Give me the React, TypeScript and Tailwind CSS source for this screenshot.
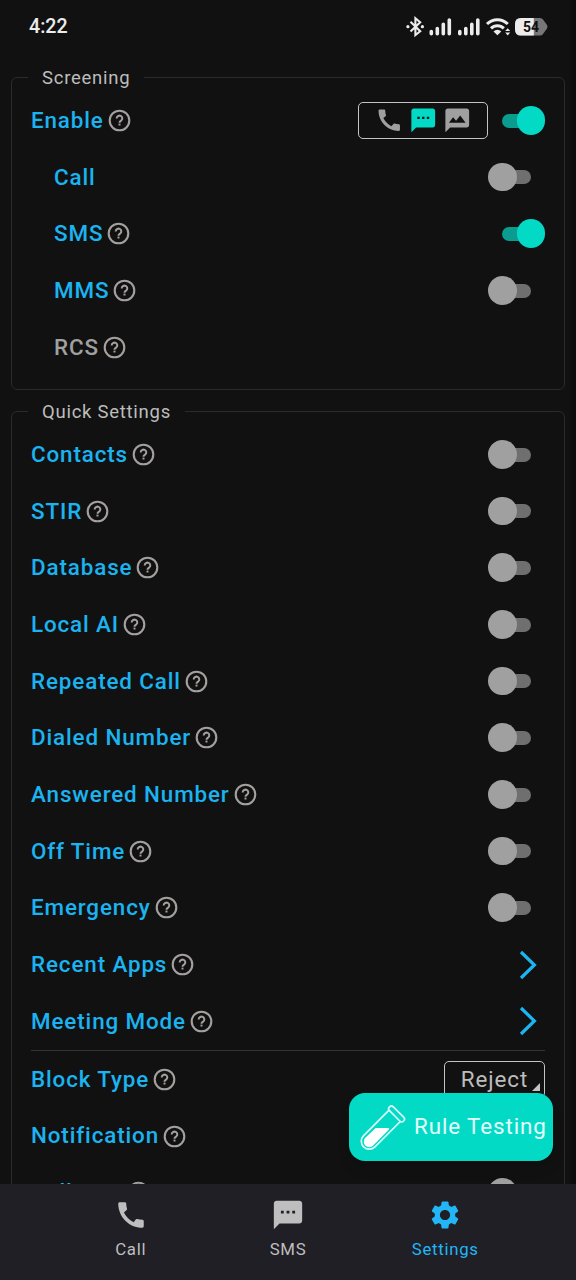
import type { ReactNode } from "react";
import { MdCall, MdSms, MdMms, MdSettings } from "react-icons/md";

function HelpIcon() {
  return (
    <svg className="ml-[4px] size-[23px] shrink-0" viewBox="0 0 23 23" fill="none">
      <circle cx="11.5" cy="11.5" r="9.8" stroke="#a3a09f" strokeWidth="2.1" />
      <path d="M8.7 9.4a2.8 2.7 0 1 1 4.5 2.1c-1 .8-1.7 1.1-1.7 2.2" stroke="#a3a09f" strokeWidth="2" />
      <rect x="10.5" y="14.6" width="2" height="1.9" fill="#a3a09f" />
    </svg>
  );
}

function Switch({ on = false }: { on?: boolean }) {
  return (
    <span className="relative flex h-[29px] w-[57px] items-center justify-center">
      <span className={`h-[14px] w-[29px] rounded-full ${on ? "bg-[#0a9c8e]" : "bg-[#6f6f6f]"}`} />
      <span
        className={`absolute top-0 size-[28.5px] rounded-full ${on ? "right-0 bg-[#03dac6]" : "left-0 bg-[#a0a0a0]"}`}
      />
    </span>
  );
}

function Arrow() {
  return (
    <svg className="mr-[8px] h-[30px] w-[18px]" viewBox="0 0 18 30" fill="none">
      <path d="M2 2 L15.4 15 L2 28" stroke="#1db4f2" strokeWidth="3.2" />
    </svg>
  );
}

type RowProps = { label: string; help?: boolean; sub?: boolean; muted?: boolean; children?: ReactNode };

function Row({ label, help = true, sub = false, muted = false, children }: RowProps) {
  return (
    <div className={`flex h-[56.67px] items-center pr-[19px] ${sub ? "pl-[42px]" : "pl-[19px]"}`}>
      <span
        className={`pb-[0.8px] text-[22.4px] leading-none font-medium tracking-[0.88px] whitespace-nowrap ${muted ? "text-[#a0a0a0]" : "text-[#1bb3f0]"}`}
      >
        {label}
      </span>
      {help && <HelpIcon />}
      <div className="ml-auto flex items-center">{children}</div>
    </div>
  );
}

function Section({ title, className, children }: { title: string; className: string; children: ReactNode }) {
  return (
    <fieldset className={`mx-[11px] rounded-[6px] border-[1.5px] border-[#2b2b2b] ${className}`}>
      <legend className="ml-[16px] h-[20px] px-[14px] text-[18.5px] leading-[20px] tracking-[0.74px] text-[#bdbdbd]">
        {title}
      </legend>
      {children}
    </fieldset>
  );
}

function StatusBar() {
  return (
    <header className="flex h-[53px] shrink-0 items-center justify-between pr-[28px] pl-[29px]">
      <span className="text-[19.6px] font-medium text-[#ececec]">4:22</span>
      <svg className="h-[24px] w-[142px]" viewBox="0 0 142 24" fill="none">
        <path d="M4.5 6.8 L14.2 16.2 L9.4 20 V3.2 L14.2 7.3 L4.5 16.6" stroke="#ececec" strokeWidth="2.1" />
        <circle cx="1.9" cy="11.7" r="1.6" fill="#ececec" />
        <circle cx="16.4" cy="11.7" r="1.6" fill="#ececec" />
        <g stroke="#ececec" strokeWidth="3.6" strokeLinecap="round">
          <path d="M25.3 16.5v2.2M31.3 13.5v5.2M37.3 9.3v9.4M43.3 5v13.7" />
          <path d="M53.8 16.5v2.2M59.8 13.5v5.2M65.8 9.3v9.4M71.8 5v13.7" />
        </g>
        <path d="M81 9a14.6 14.6 0 0 1 20.8 0M85 13.4a9 9 0 0 1 12.8 0" stroke="#ececec" strokeWidth="3" />
        <path d="M87.5 16.4a5.6 5.6 0 0 1 7.8 0L91.4 20.2z" fill="#ececec" />
        <path d="M99.2 16 101.7 13.2 104.2 16zM99.2 17.6 101.7 20.4 104.2 17.6z" fill="#ececec" />
        <path d="M115 3h19q2 0 3 1.5l4 5.5q1 1.8 0 3.6l-4 5.5q-1 1.5-3 1.5h-19q-6 0-6-6V9q0-6 6-6z" fill="#777" />
        <path d="M115 3h12.8v17.6H115q-6 0-6-6V9q0-6 6-6z" fill="#ececec" />
        <text x="117" y="16.8" fontSize="14" fontWeight="700" fill="#111">54</text>
      </svg>
    </header>
  );
}

function TestTube() {
  return (
    <svg className="h-[48px] w-[46px] shrink-0" viewBox="0 0 46 48" fill="none" stroke="#d9fffa">
      <g transform="translate(36.5 11) rotate(45)" strokeWidth="1.7">
        <path d="M-8 2.6V38.5a8 8 0 0 0 16 0V2.6" />
        <rect x="-10" y="-2.8" width="20" height="5.4" rx="2.7" />
      </g>
      <path d="M15.7 25H28.7q1 .5 .2 1.5L13.2 42.6a5.5 5.5 0 0 1-7.8-7.8z" fill="#fff" stroke="none" />
    </svg>
  );
}

function NavItem({ icon, label, active = false }: { icon: ReactNode; label: string; active?: boolean }) {
  return (
    <div className={`flex w-[157.3px] flex-col items-center pt-[14px] ${active ? "text-[#22b6f6]" : "text-[#bebebf]"}`}>
      {icon}
      <span className="mt-[6.5px] text-[16.8px] leading-[20px] tracking-[0.7px]">{label}</span>
    </div>
  );
}

const toggles = [
  "Contacts",
  "STIR",
  "Database",
  "Local AI",
  "Repeated Call",
  "Dialed Number",
  "Answered Number",
  "Off Time",
  "Emergency",
];

export default function App() {
  return (
    <div className="relative flex h-[1280px] w-[576px] flex-col overflow-hidden bg-[#111111] bg-[linear-gradient(90deg,#111111_98.7%,#0c0c0c_99.5%)] font-['Roboto',sans-serif]">
      <StatusBar />
      <main className="min-h-0 flex-1 overflow-hidden pt-[14.5px]">
        <Section title="Screening" className="h-[322px] pt-[4.8px]">
          <Row label="Enable">
            <div className="flex h-[37px] w-[130px] items-center justify-center gap-[5.5px] rounded-[5px] border-[1.5px] border-[#c4c4c4] text-[#a0a0a0]">
              <MdCall size={28.5} />
              <MdSms size={28.5} className="text-[#03dac6]" />
              <MdMms size={28.5} />
            </div>
            <Switch on />
          </Row>
          <Row label="Call" help={false} sub>
            <Switch />
          </Row>
          <Row label="SMS" sub>
            <Switch on />
          </Row>
          <Row label="MMS" sub>
            <Switch />
          </Row>
          <Row label="RCS" sub muted />
        </Section>
        <Section title="Quick Settings" className="mt-[12px] h-[900px] pt-[4.8px]">
          {toggles.map((label) => (
            <Row key={label} label={label}>
              <Switch />
            </Row>
          ))}
          <Row label="Recent Apps">
            <Arrow />
          </Row>
          <Row label="Meeting Mode">
            <Arrow />
          </Row>
          <div className="mx-[19px] h-[1.5px] bg-[#343434]" />
          <Row label="Block Type">
            <div className="relative flex h-[37px] w-[101px] items-center justify-center rounded-[5px] border-[1.5px] border-[#c4c4c4] text-[22.4px] tracking-[0.9px] text-[#bdbdbd]">
              Reject
              <svg className="absolute right-[4.5px] bottom-[6px] size-[8px]" viewBox="0 0 8 8">
                <path d="M8 0v8H0z" fill="#c4c4c4" />
              </svg>
            </div>
          </Row>
          <Row label="Notification" />
          <Row label="Caller ID">
            <Switch />
          </Row>
        </Section>
      </main>
      <button className="absolute top-[1093px] left-[349px] flex h-[68px] w-[204px] items-center rounded-[16px] bg-[#03dac6] pl-[11px] text-[22.4px] tracking-[0.9px] whitespace-nowrap text-[#e4fffb] shadow-lg">
        <TestTube />
        <span className="ml-[8px]">Rule Testing</span>
      </button>
      <nav className="z-10 flex h-[96px] shrink-0 justify-center bg-[#201f25]">
        <NavItem icon={<MdCall size={34} />} label="Call" />
        <NavItem icon={<MdSms size={34} />} label="SMS" />
        <NavItem icon={<MdSettings size={34} />} label="Settings" active />
      </nav>
    </div>
  );
}
